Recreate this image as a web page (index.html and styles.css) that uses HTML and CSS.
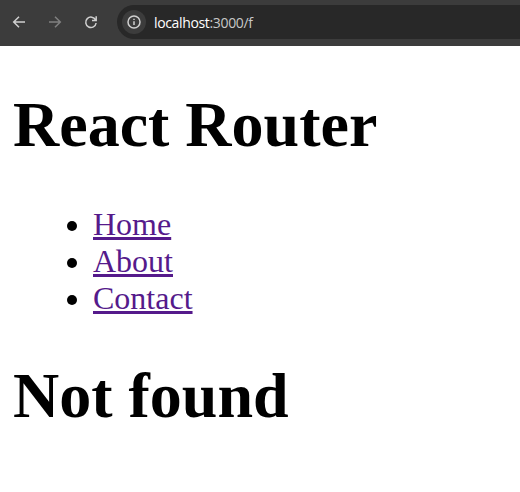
FILE: index.html
```html
<!DOCTYPE html>
<html lang="en">
<head>
<meta charset="utf-8">
<title>React Router</title>
<link rel="stylesheet" href="styles.css">
</head>
<body>
<header class="toolbar">
  <svg class="icon" viewBox="0 0 16 16"><path d="M14 8H3M8 2.7L2.7 8 8 13.3"/></svg>
  <svg class="icon dim" viewBox="0 0 16 16"><path d="M2 8h11M8 2.7L13.3 8 8 13.3"/></svg>
  <svg class="icon" viewBox="0 0 16 16"><path d="M12.6 6A5.2 5.2 0 1 0 13.1 9M13.2 2.2V6.4H9"/></svg>
  <div class="address">
    <span class="info"><svg class="icon" viewBox="0 0 16 16"><circle cx="8" cy="8" r="6"/><path d="M8 7.2v3.8M8 4.7v1.4"/></svg></span>
    <span class="url">localhost<span class="rest">:3000/f</span></span>
  </div>
</header>
<main class="page">
  <h1>React Router</h1>
  <ul>
    <li><a href="#">Home</a></li>
    <li><a href="#">About</a></li>
    <li><a href="#">Contact</a></li>
  </ul>
  <h1>Not found</h1>
</main>
</body>
</html>
```
FILE: styles.css
```css
body { margin: 0; height: 492px; overflow: hidden; background: #fff; color: #000; font-family: "Liberation Serif", "Times New Roman", serif; }
.toolbar { display: flex; align-items: center; box-sizing: border-box; height: 46px; padding: 0 0 2px 11px; gap: 20px; background: #3c3c3c; }
.icon { display: block; flex: none; width: 16px; height: 16px; fill: none; stroke: #d0d0d0; stroke-width: 1.5; }
.dim { stroke: #808080; }
.address { display: flex; align-items: center; flex: 1; height: 34px; margin-left: -2px; padding-left: 5px; border-radius: 17px 0 0 17px; background: #282828; }
.info { display: grid; place-items: center; width: 24px; height: 24px; border-radius: 50%; background: #3c3c3c; }
.url { margin-left: 8px; font: 14px "Open Sans", sans-serif; letter-spacing: -0.35px; color: #fff; }
.rest { color: #c7c7c7; }
.page { padding: 0 13px; font-size: 32px; line-height: 37px; }
h1 { margin: 41px 0 44px; font-size: 64px; line-height: 75px; font-weight: bold; }
ul { margin: 0; padding-left: 80px; }
a { color: #551a8b; text-decoration: underline; }
```
